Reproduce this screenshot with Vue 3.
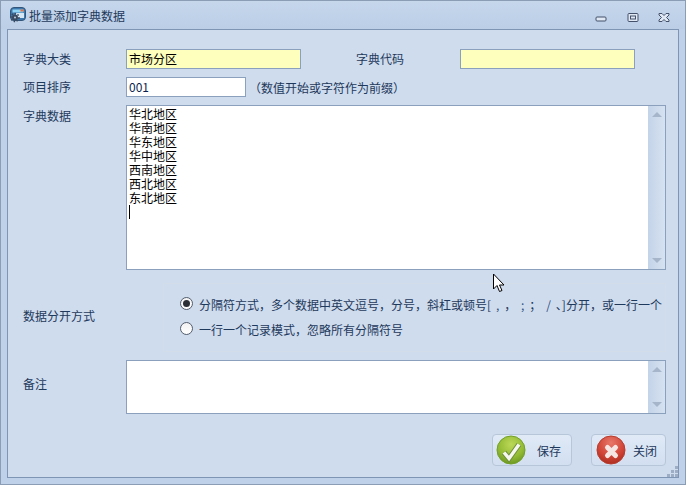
<template>
  <div class="window">
    <div class="titlebar">
      <svg class="app-icon" width="16" height="16" viewBox="0 0 16 16">
        <rect x="0.500" y="0.500" width="15" height="13" rx="3.500" fill="#3c78ad" stroke="#34557a" />
        <rect x="2.500" y="2.500" width="11" height="3" fill="#8fd3f5" />
        <rect x="10.500" y="2.500" width="3" height="2" fill="#e9703c" />
        <rect x="6" y="6" width="8" height="5" fill="#d5e6f4" />
        <circle cx="5" cy="10.500" r="3" fill="#3a4a60" />
        <circle cx="5" cy="10.500" r="4" fill="none" stroke="#3a4a60" stroke-width="1.500" stroke-dasharray="1.500 1.500" />
        <circle cx="5" cy="10.500" r="1" fill="#b9cbdd" />
      </svg>
      <span class="title">批量添加字典数据</span>
      <div class="win-buttons">
        <svg class="win-min" width="12" height="12" viewBox="0 0 12 12">
          <rect x="1" y="5" width="10" height="4" rx="1" fill="#dfe8f3" stroke="#44506a" />
        </svg>
        <svg width="12" height="12" viewBox="0 0 12 12">
          <rect x="1" y="1.500" width="10" height="8" rx="1" fill="#dfe8f3" stroke="#44506a" />
          <rect x="3.500" y="4" width="5" height="3" fill="#dfe8f3" stroke="#44506a" />
        </svg>
        <svg width="12" height="12" viewBox="0 0 12 12">
          <path d="M1 1.500h3l2 2 2-2h3v1.500l-2.500 2.500 2.500 2.500v1.500h-3l-2-2-2 2h-3v-1.500l2.500-2.500-2.500-2.500z" fill="#dfe8f3" stroke="#44506a" />
        </svg>
      </div>
    </div>

    <div class="panel">
      <div class="row row-first">
        <label class="label">字典大类</label>
        <div class="input required wide">市场分区</div>
        <label class="label code-label">字典代码</label>
        <div class="input required wide"></div>
      </div>

      <div class="row">
        <label class="label">项目排序</label>
        <div class="input narrow">001</div>
        <span class="hint">（数值开始或字符作为前缀）</span>
      </div>

      <div class="row row-top">
        <label class="label label-top">字典数据</label>
        <div class="memo memo-data">
          <div class="memo-text">
            <div v-for="line in lines" :key="line">{{ line }}</div>
            <div class="caret"></div>
          </div>
          <div class="scrollbar">
            <span class="arrow-up"></span>
            <span class="arrow-down"></span>
          </div>
        </div>
      </div>

      <div class="row split-row">
        <label class="label">数据分开方式</label>
        <div class="split-group">
          <div class="radio-line">
            <span class="radio checked"></span>
            <span class="radio-text">分隔符方式，多个数据中英文逗号，分号，斜杠或顿号[<i class="sep">,</i>，<i class="sep">;</i>；<i class="sep">/</i>、]分开，或一行一个</span>
          </div>
          <div class="radio-line">
            <span class="radio"></span>
            <span class="radio-text">一行一个记录模式，忽略所有分隔符号</span>
          </div>
        </div>
      </div>

      <div class="row note-row">
        <label class="label">备注</label>
        <div class="memo memo-note">
          <div class="memo-text"></div>
          <div class="scrollbar">
            <span class="arrow-up"></span>
            <span class="arrow-down"></span>
          </div>
        </div>
      </div>

      <div class="actions">
        <button class="btn btn-save">
          <svg width="30" height="30" viewBox="0 0 30 30">
            <defs>
              <radialGradient id="greenBall" cx="50%" cy="30%" r="75%">
                <stop offset="0" stop-color="#bcd858" />
                <stop offset="0.6" stop-color="#93bb34" />
                <stop offset="1" stop-color="#64921e" />
              </radialGradient>
            </defs>
            <circle cx="15" cy="15" r="14" fill="url(#greenBall)" stroke="#74a02a" />
            <polyline points="8,17.500 13,23.500 23,9.500" fill="none" stroke="#6f8f3a" stroke-width="5.500" />
            <polyline points="8,17.500 13,23.500 23,9.500" fill="none" stroke="#f6f8f0" stroke-width="3.500" />
          </svg>
          <span>保存</span>
        </button>
        <button class="btn btn-close">
          <svg width="30" height="30" viewBox="0 0 30 30">
            <defs>
              <radialGradient id="redBall" cx="50%" cy="25%" r="80%">
                <stop offset="0" stop-color="#e8786a" />
                <stop offset="0.6" stop-color="#d04436" />
                <stop offset="1" stop-color="#a62a1c" />
              </radialGradient>
            </defs>
            <circle cx="15" cy="15" r="14" fill="url(#redBall)" stroke="#b83c2e" />
            <path d="M11.500 12.500l8 8M19.500 12.500l-8 8" fill="none" stroke="#f5e6e3" stroke-width="5" stroke-linecap="round" />
          </svg>
          <span>关闭</span>
        </button>
      </div>
    </div>

    <svg class="grip" width="11" height="11" viewBox="0 0 11 11">
      <path d="M8 0h3v3H8zM4 4h3v3H4zM8 4h3v3H8zM0 8h3v3H0zM4 8h3v3H4zM8 8h3v3H8z" fill="#9dadc3" />
    </svg>

    <svg class="cursor" width="14" height="21" viewBox="0 0 14 21">
      <path d="M1.500 1v15l3.500-3.500 2.500 6 2.500-1-2.500-5.500h4.500z" fill="#fff" stroke="#000" stroke-width="1" />
    </svg>
  </div>
</template>

<script setup>
const lines = ['华北地区', '华南地区', '华东地区', '华中地区', '西南地区', '西北地区', '东北地区']
</script>

<style>
html, body {
  margin: 0;
  padding: 0;
  overflow: hidden;
}
</style>

<style scoped>
.window {
  position: relative;
  box-sizing: border-box;
  width: 686px;
  height: 485px;
  padding: 0 6px 6px;
  background: #bfd1e8;
  border: 1px solid #8b9db4;
  font-family: "Noto Sans CJK SC", "Liberation Sans", sans-serif;
  font-size: 12px;
  color: #1e395b;
  display: flex;
  flex-direction: column;
}

.titlebar {
  height: 28px;
  flex: none;
  display: flex;
  align-items: center;
  gap: 3px;
  margin: 0 -6px;
  padding-left: 9px;
  background: linear-gradient(#c6d7ec, #bbcee6);
}

.title {
  font-size: 12px;
  color: #1e395b;
}

.win-buttons {
  margin-left: auto;
  margin-top: 6px;
  margin-right: 15px;
  display: flex;
  gap: 19px;
}

.win-min {
  margin-right: 1px;
}

.panel {
  flex: 1;
  box-sizing: border-box;
  background: #cfdcee;
  border: 1px solid #7e95b4;
  padding: 19px 12px 0 15px;
  display: flex;
  flex-direction: column;
}

.row {
  display: flex;
  align-items: center;
  height: 20px;
  margin-bottom: 8px;
}

.row-top {
  align-items: flex-start;
  height: 165px;
  margin-bottom: 13px;
}

.label {
  width: 103px;
  flex: none;
  line-height: 20px;
}

.label-top {
  margin-top: 1px;
}

.code-label {
  width: 104px;
  margin-left: 55px;
}

.input {
  box-sizing: border-box;
  height: 20px;
  line-height: 18px;
  padding-left: 2px;
  border: 1px solid #8ba0bc;
  background: #fff;
  color: #000;
  flex: none;
}

.required {
  background: #ffffbd;
}

.wide {
  width: 175px;
}

.narrow {
  width: 120px;
  color: #0c1f4d;
}

.hint {
  margin-left: 3px;
}

.memo {
  box-sizing: border-box;
  width: 540px;
  flex: none;
  display: flex;
  background: #fff;
  border: 1px solid #8ba0bc;
}

.memo-data {
  height: 165px;
}

.memo-note {
  height: 54px;
}

.memo-text {
  flex: 1;
  padding: 1px 0 0 2px;
  line-height: 14px;
  color: #000;
}

.caret {
  width: 1px;
  height: 14px;
  background: #000;
}

.scrollbar {
  width: 17px;
  flex: none;
  background: linear-gradient(90deg, #c3d3e8, #d6e2f1);
  display: flex;
  flex-direction: column;
  align-items: center;
  justify-content: space-between;
  padding: 6px 0;
  box-sizing: border-box;
}

.arrow-up,
.arrow-down {
  width: 0;
  height: 0;
  border-left: 5px solid transparent;
  border-right: 5px solid transparent;
}

.arrow-up {
  border-bottom: 5px solid #a6b5ca;
}

.arrow-down {
  border-top: 5px solid #a6b5ca;
}

.split-row {
  height: 69px;
  margin-bottom: 8px;
}

.split-row .label {
  margin-bottom: 3px;
}

.split-group {
  box-sizing: border-box;
  width: 503px;
  height: 69px;
  margin-left: 37px;
  padding: 7px 0 0 16px;
  border: 1px solid #d3dce9;
  display: flex;
  flex-direction: column;
  white-space: nowrap;
  flex: none;
}

.radio-line {
  display: flex;
  align-items: center;
  height: 25px;
  gap: 6px;
}

.radio-text {
  margin-top: 2px;
}

.sep {
  font-style: normal;
  color: #33507e;
  margin: 0 4.900px;
}

.radio {
  box-sizing: border-box;
  width: 13px;
  height: 13px;
  border-radius: 50%;
  border: 1px solid #545d6c;
  background: linear-gradient(#f2f2f2, #fff);
  flex: none;
  position: relative;
}

.radio.checked::after {
  content: "";
  position: absolute;
  left: 2px;
  top: 2px;
  width: 7px;
  height: 7px;
  border-radius: 50%;
  background: #2c2f36;
}

.note-row {
  height: 54px;
  margin-bottom: 20px;
}

.note-row .label {
  margin-bottom: 6px;
}

.actions {
  display: flex;
  justify-content: flex-end;
  gap: 19px;
}

.btn {
  box-sizing: border-box;
  height: 32px;
  padding: 0 0 0 3px;
  border: 1px solid #b8c6da;
  border-radius: 4px;
  background: linear-gradient(#e0eaf7, #d2dff0);
  font: inherit;
  color: #1e395b;
  display: flex;
  align-items: center;
}

.btn svg {
  flex: none;
  margin-top: -1px;
}

.btn-save {
  width: 80px;
}

.btn-save span {
  margin-left: 11px;
}

.btn-close {
  width: 75px;
  padding-left: 4px;
}

.btn-close span {
  margin-left: 7px;
}

.grip {
  position: absolute;
  left: 666px;
  top: 465px;
}

.cursor {
  position: absolute;
  left: 491px;
  top: 272px;
}
</style>
